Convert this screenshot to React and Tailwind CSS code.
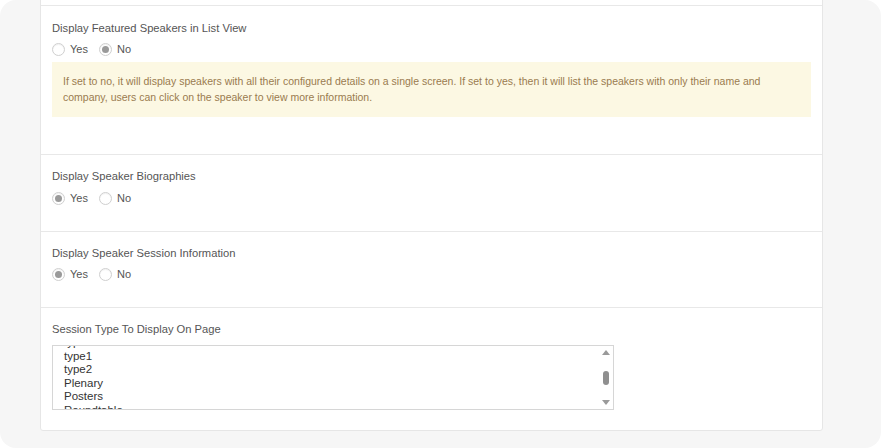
const font = { fontFamily: '"Liberation Sans", Arial, sans-serif' };

function Radio({ label, checked }) {
  return (
    <label className="flex items-center gap-[5px] mr-[11px]">
      <span className="w-[13px] h-[13px] rounded-full border border-[#cfcfcf] bg-white flex items-center justify-center shadow-[inset_0_1px_1px_rgba(0,0,0,0.06)]">
        {checked && <span className="w-[7px] h-[7px] rounded-full bg-[#9a9a9a]" />}
      </span>
      <span className="text-[11px] leading-[14px] text-[#555]">{label}</span>
    </label>
  );
}

function YesNo({ value }) {
  return (
    <div className="flex items-center">
      <Radio label="Yes" checked={value === "yes"} />
      <Radio label="No" checked={value === "no"} />
    </div>
  );
}

function Label({ children }) {
  return <div className="text-[11.2px] leading-[14px] text-[#555]">{children}</div>;
}

export default function App() {
  const sessionTypes = ["type", "type1", "type2", "Plenary", "Posters", "Roundtable"];

  return (
    <div className="w-[881px] h-[448px] bg-white" style={font}>
      <div className="h-full bg-[#f6f6f6] rounded-[16px] overflow-hidden pl-[40px] pr-[58px]">
        <div className="-mt-[20px] bg-white border border-[#e6e6e6] rounded-b-[3px]">
          <div className="h-[25px] border-b border-[#e8e8e8]" />

          {/* Featured speakers */}
          <div className="px-[11px] pt-[15px] pb-[37px] border-b border-[#e8e8e8]">
            <Label>Display Featured Speakers in List View</Label>
            <div className="mt-[7px]">
              <YesNo value="no" />
            </div>
            <div className="mt-[6px] bg-[#fcf8e3] pl-[11px] pr-[40px] pt-[11px] pb-[12px] text-[10.5px] leading-[16px] text-[#9a7b4f]">
              If set to no, it will display speakers with all their configured details on a single screen. If set to yes, then it will list the speakers with only their name and company, users can click on the speaker to view more information.
            </div>
          </div>

          {/* Biographies */}
          <div className="px-[11px] pt-[14px] pb-[26px] border-b border-[#e8e8e8]">
            <Label>Display Speaker Biographies</Label>
            <div className="mt-[8px]">
              <YesNo value="yes" />
            </div>
          </div>

          {/* Session info */}
          <div className="px-[11px] pt-[14px] pb-[26px] border-b border-[#e8e8e8]">
            <Label>Display Speaker Session Information</Label>
            <div className="mt-[7px]">
              <YesNo value="yes" />
            </div>
          </div>

          {/* Session types */}
          <div className="px-[11px] pt-[14px] pb-[20px]">
            <Label>Session Type To Display On Page</Label>
            <div className="mt-[9px] w-[562px] h-[65px] border border-[#d6d6d6] flex">
              <div className="flex-1 overflow-hidden pl-[11px]">
                <div className="-mt-[10px]">
                  {sessionTypes.map((t) => (
                    <div key={t} className="text-[11.5px] leading-[13.6px] text-[#333]">
                      {t}
                    </div>
                  ))}
                </div>
              </div>
              <div className="w-[14px] flex flex-col items-center justify-between py-[3px]">
                <svg width="8" height="6" viewBox="0 0 8 6">
                  <path d="M0 6 L4 1 L8 6 Z" fill="#9a9a9a" />
                </svg>
                <span className="w-[6px] h-[14px] rounded-full bg-[#8f8f8f]" />
                <svg width="8" height="6" viewBox="0 0 8 6">
                  <path d="M0 0 L4 5 L8 0 Z" fill="#9a9a9a" />
                </svg>
              </div>
            </div>
          </div>
        </div>
      </div>
    </div>
  );
}
